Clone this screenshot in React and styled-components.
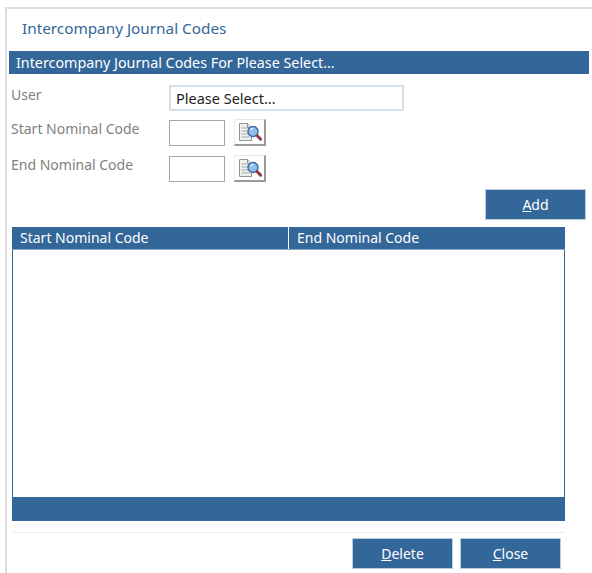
import React from 'react';
import styled, { createGlobalStyle } from 'styled-components';

const GlobalStyle = createGlobalStyle`
  html, body {
    margin: 0;
    padding: 0;
    background: #fff;
    font-family: "Noto Sans", "Open Sans", sans-serif;
  }
`;

const blue = '#336699';

const LookupIcon = () => (
  <svg width="26" height="22" viewBox="0 0 26 22">
    <path d="M2.5 2.5h8l4 4v13h-12z" fill="#f1f1ec" stroke="#8f949a" strokeWidth="1" />
    <path d="M4.5 7h6M4.5 10h6M4.5 13h7M4.5 16h8" stroke="#a4a9ae" strokeWidth="1" />
    <path d="M10.5 2.5v4h4" fill="#d9dde2" stroke="#8f949a" strokeWidth="1" />
    <circle cx="16" cy="10.5" r="5" fill="#8fc0ee" stroke="#3f6ca8" strokeWidth="1.5" />
    <path d="M13.6 9a3 3 0 0 1 2.4-1.6" stroke="#eaf4ff" strokeWidth="1.2" fill="none" />
    <path d="M20 14.5l3.6 3.6" stroke="#8c3a4a" strokeWidth="3" strokeLinecap="round" />
  </svg>
);

const App = () => (
  <>
    <GlobalStyle />
    <Page>
      <Title>Intercompany Journal Codes</Title>
      <Band>Intercompany Journal Codes For Please Select...</Band>
      <Form>
        <UserRow>
          <Label>User</Label>
          <SelectBox>Please Select...</SelectBox>
        </UserRow>
        <CodeRow>
          <Label $tight>Start Nominal Code</Label>
          <CodeInput />
          <LookupButton><LookupIcon /></LookupButton>
        </CodeRow>
        <CodeRow>
          <Label $tight>End Nominal Code</Label>
          <CodeInput />
          <LookupButton><LookupIcon /></LookupButton>
        </CodeRow>
      </Form>
      <AddRow>
        <ActionButton><u>A</u>dd</ActionButton>
      </AddRow>
      <Grid>
        <GridHead>
          <HeadCell $width={276}>Start Nominal Code</HeadCell>
          <HeadCell>End Nominal Code</HeadCell>
        </GridHead>
        <GridBody />
        <GridFoot />
      </Grid>
      <Footer>
        <ActionButton><u>D</u>elete</ActionButton>
        <ActionButton><u>C</u>lose</ActionButton>
      </Footer>
    </Page>
  </>
);

export default App;

const Page = styled.div`
  box-sizing: border-box;
  width: 592px;
  height: 573px;
  margin-top: 7px;
  margin-left: 5px;
  border-top: 2px solid #dcdcdc;
  border-left: 2px solid #dcdcdc;
  padding-left: 2px;
  overflow: hidden;
`;

const Title = styled.div`
  height: 42px;
  line-height: 39px;
  padding-left: 13px;
  font-size: 15.3px;
  color: ${blue};
`;

const Band = styled.div`
  width: 580px;
  height: 23px;
  line-height: 23px;
  padding-left: 7px;
  box-sizing: border-box;
  background: ${blue};
  color: #fff;
  font-size: 14.3px;
`;

const Form = styled.div`
  display: flex;
  flex-direction: column;
  padding: 11px 0 0 2px;
`;

const UserRow = styled.div`
  display: flex;
  height: 35px;
`;

const CodeRow = styled.div`
  display: flex;
  align-items: flex-start;
  height: 36px;
`;

const Label = styled.div`
  width: 158px;
  font-size: 14px;
  line-height: ${(p) => (p.$tight ? '17px' : '19px')};
  color: #7f7f7f;
`;

const SelectBox = styled.div`
  box-sizing: border-box;
  width: 235px;
  height: 26px;
  line-height: 22px;
  padding-left: 5px;
  border: 2.5px solid #d6e0ea;
  font-size: 14.5px;
  color: #222;
`;

const CodeInput = styled.div`
  box-sizing: border-box;
  width: 56px;
  height: 26px;
  border: 1px solid #a6a6a6;
`;

const LookupButton = styled.div`
  box-sizing: border-box;
  display: flex;
  align-items: center;
  justify-content: center;
  width: 32px;
  height: 27px;
  margin: -1px 0 0 9px;
  border-top: 1px solid #e8e8e8;
  border-left: 1px solid #f0f0f0;
  border-right: 2px solid #9a9a9a;
  border-bottom: 2px solid #9a9a9a;
`;

const AddRow = styled.div`
  display: flex;
  justify-content: flex-end;
  width: 577px;
  margin-top: -3px;
`;

const ActionButton = styled.div`
  box-sizing: border-box;
  width: 101px;
  height: 31px;
  line-height: 29px;
  text-align: center;
  background: ${blue};
  border: 1px solid #b9cde0;
  color: #fff;
  font-size: 14px;
`;

const Grid = styled.div`
  display: flex;
  flex-direction: column;
  width: 553px;
  height: 294px;
  margin: 7px 0 0 3px;
`;

const GridHead = styled.div`
  display: flex;
  height: 22px;
  flex: none;
  background: ${blue};
  border-bottom: 1px solid #8aa8c6;
`;

const HeadCell = styled.div`
  box-sizing: border-box;
  width: ${(p) => (p.$width ? `${p.$width}px` : 'auto')};
  flex: ${(p) => (p.$width ? 'none' : 1)};
  padding-left: 8px;
  line-height: 21px;
  color: #fff;
  font-size: 14px;
  & + & {
    border-left: 1px solid #fff;
  }
`;

const GridBody = styled.div`
  flex: 1;
  border-left: 1px solid ${blue};
  border-right: 1px solid ${blue};
`;

const GridFoot = styled.div`
  flex: none;
  height: 24px;
  background: ${blue};
`;

const Footer = styled.div`
  display: flex;
  justify-content: flex-end;
  gap: 7px;
  box-sizing: border-box;
  width: 553px;
  height: 40px;
  margin: 11px 0 0 3px;
  padding: 5px 4px 0 0;
  border-top: 1px solid #ececec;
`;
